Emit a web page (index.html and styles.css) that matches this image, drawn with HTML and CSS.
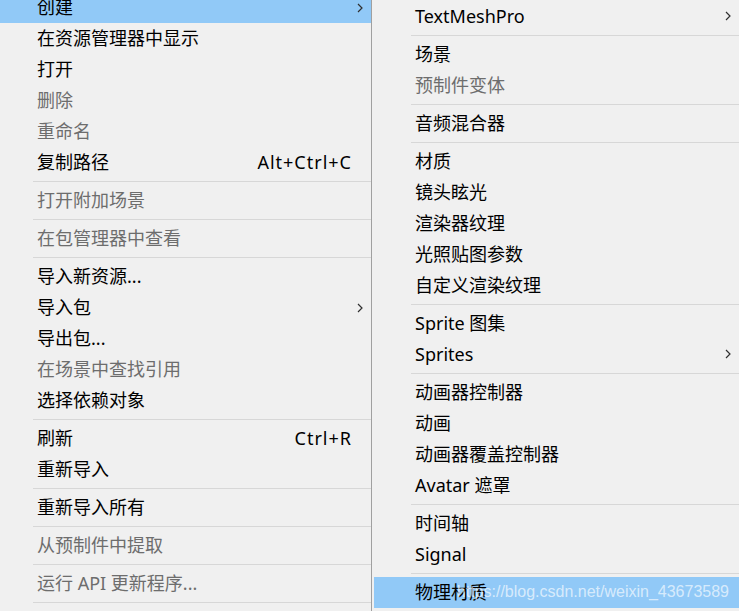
FILE: index.html
```html
<!DOCTYPE html>
<html lang="zh-CN">
<head>
<meta charset="utf-8">
<title>Menu</title>
<link rel="stylesheet" href="styles.css">
</head>
<body>
<div class="screen">
  <ul class="menu menu-left">
    <li class="item active"><span class="label">创建</span><svg class="chev" viewBox="0 0 6 10"><path d="M1 1 L5 5 L1 9"/></svg></li>
    <li class="item"><span class="label">在资源管理器中显示</span></li>
    <li class="item"><span class="label">打开</span></li>
    <li class="item disabled"><span class="label">删除</span></li>
    <li class="item disabled"><span class="label">重命名</span></li>
    <li class="item"><span class="label">复制路径</span><span class="shortcut">Alt+Ctrl+C</span></li>
    <li class="sep"></li>
    <li class="item disabled"><span class="label">打开附加场景</span></li>
    <li class="sep"></li>
    <li class="item disabled"><span class="label">在包管理器中查看</span></li>
    <li class="sep"></li>
    <li class="item"><span class="label">导入新资源...</span></li>
    <li class="item"><span class="label">导入包</span><svg class="chev" viewBox="0 0 6 10"><path d="M1 1 L5 5 L1 9"/></svg></li>
    <li class="item"><span class="label">导出包...</span></li>
    <li class="item disabled"><span class="label">在场景中查找引用</span></li>
    <li class="item"><span class="label">选择依赖对象</span></li>
    <li class="sep"></li>
    <li class="item"><span class="label">刷新</span><span class="shortcut">Ctrl+R</span></li>
    <li class="item"><span class="label">重新导入</span></li>
    <li class="sep"></li>
    <li class="item"><span class="label">重新导入所有</span></li>
    <li class="sep"></li>
    <li class="item disabled"><span class="label">从预制件中提取</span></li>
    <li class="sep"></li>
    <li class="item disabled"><span class="label">运行 API 更新程序...</span></li>
    <li class="sep"></li>
  </ul>
  <ul class="menu menu-right">
    <li class="item"><span class="label">TextMeshPro</span><svg class="chev" viewBox="0 0 6 10"><path d="M1 1 L5 5 L1 9"/></svg></li>
    <li class="sep"></li>
    <li class="item"><span class="label">场景</span></li>
    <li class="item disabled"><span class="label">预制件变体</span></li>
    <li class="sep"></li>
    <li class="item"><span class="label">音频混合器</span></li>
    <li class="sep"></li>
    <li class="item"><span class="label">材质</span></li>
    <li class="item"><span class="label">镜头眩光</span></li>
    <li class="item"><span class="label">渲染器纹理</span></li>
    <li class="item"><span class="label">光照贴图参数</span></li>
    <li class="item"><span class="label">自定义渲染纹理</span></li>
    <li class="sep"></li>
    <li class="item"><span class="label">Sprite 图集</span></li>
    <li class="item"><span class="label">Sprites</span><svg class="chev" viewBox="0 0 6 10"><path d="M1 1 L5 5 L1 9"/></svg></li>
    <li class="sep"></li>
    <li class="item"><span class="label">动画器控制器</span></li>
    <li class="item"><span class="label">动画</span></li>
    <li class="item"><span class="label">动画器覆盖控制器</span></li>
    <li class="item"><span class="label">Avatar 遮罩</span></li>
    <li class="sep"></li>
    <li class="item"><span class="label">时间轴</span></li>
    <li class="item"><span class="label">Signal</span></li>
    <li class="sep"></li>
    <li class="item active"><span class="label">物理材质</span><span class="watermark">https://blog.csdn.net/weixin_43673589</span></li>
  </ul>
</div>
</body>
</html>
```

FILE: styles.css
```css
* { box-sizing: border-box; }

html, body {
  margin: 0;
  padding: 0;
  width: 739px;
  height: 611px;
  overflow: hidden;
  background: #f0f0f0;
}

.screen {
  display: flex;
  align-items: flex-start;
  width: 739px;
  height: 611px;
  overflow: hidden;
  font-family: "Noto Sans", "Noto Sans CJK SC", sans-serif;
  font-size: 18px;
  color: #000;
}

.menu {
  list-style: none;
  margin: 0;
  padding: 0;
  background: #f0f0f0;
}

.menu-left {
  width: 371px;
  flex: none;
  margin-top: -8px;
}

.menu-right {
  flex: 1;
  align-self: stretch;
  border-left: 1px solid #a0a0a0;
  padding-left: 2px;
  padding-top: 0.5px;
}

.item {
  position: relative;
  display: flex;
  align-items: center;
  height: 31px;
  white-space: nowrap;
}

.menu-left .item { padding-left: 37px; padding-right: 20px; }
.menu-right .item { padding-left: 41px; padding-right: 8px; }

.label {
  flex: 1;
  line-height: 31px;
}

.item.disabled { color: #6d6d6d; }

.item.active { background: #91c9f7; }

.shortcut {
  line-height: 31px;
  letter-spacing: 1px;
  margin-right: -1px;
}

.sep {
  height: 7px;
  display: flex;
  align-items: center;
}
.sep::before {
  content: "";
  display: block;
  height: 1px;
  width: 100%;
  background: #d7d7d7;
}
.menu-left .sep { padding-left: 33px; }
.menu-right .sep { padding-left: 37px; }

.chev {
  width: 6px;
  height: 10px;
  fill: none;
  stroke: #303030;
  stroke-width: 1.2;
  flex: none;
}
.menu-left .chev { margin-right: -12px; }
.menu-right .chev { margin-right: 0; }

.watermark {
  position: absolute;
  right: 10px;
  top: 50%;
  transform: translateY(-50%);
  font-family: "Liberation Sans", Arial, sans-serif;
  font-size: 16px;
  color: rgba(255, 255, 255, 0.65);
  line-height: 1;
}
```
